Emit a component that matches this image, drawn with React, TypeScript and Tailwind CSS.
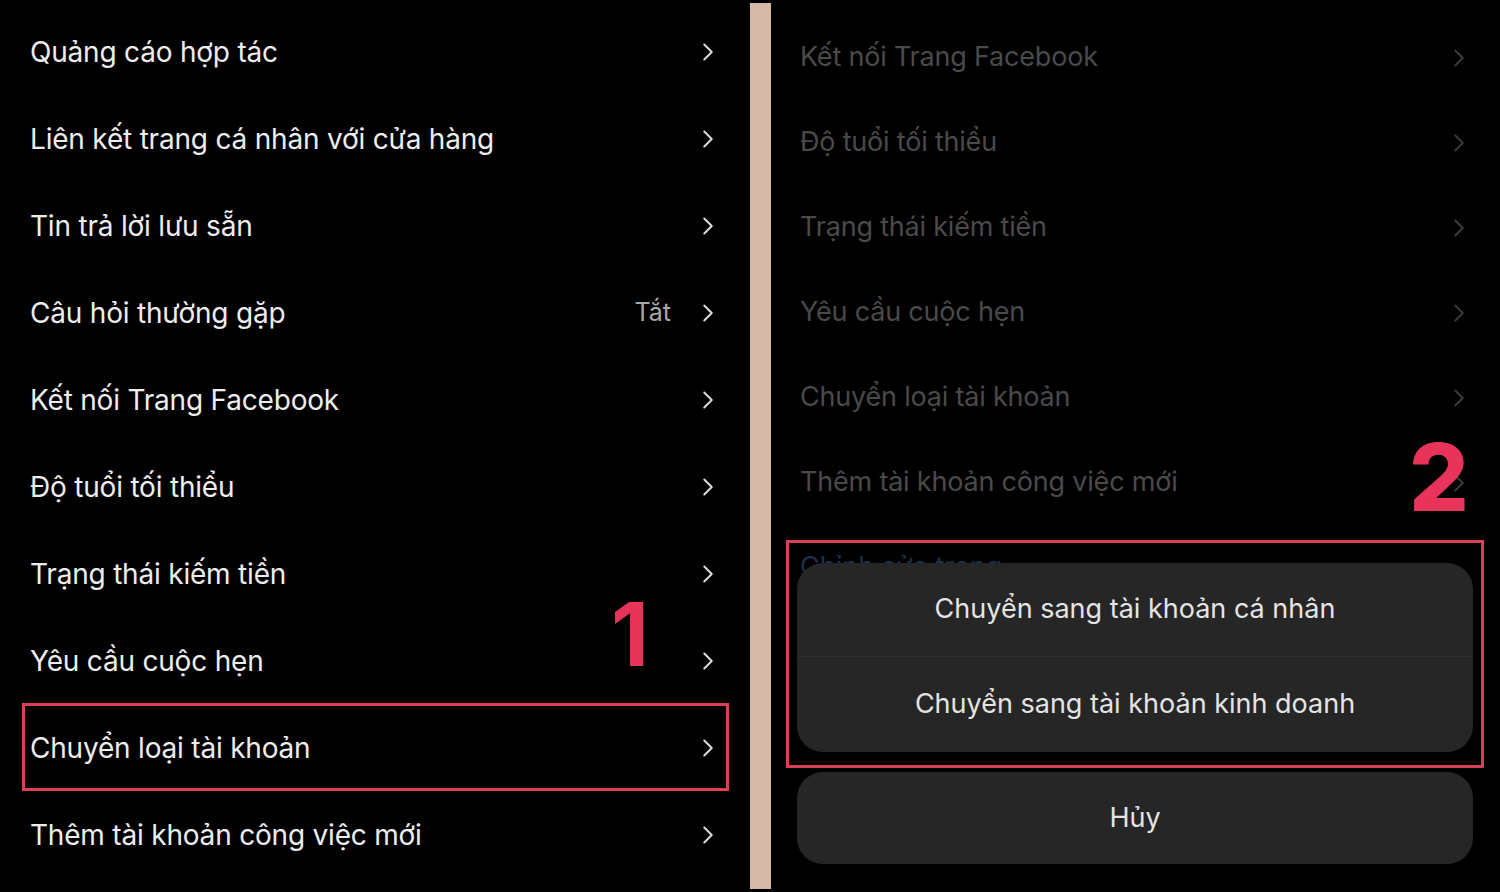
import {ChevronRight} from 'lucide-react';

const leftItems = [
	{label: 'Quảng cáo hợp tác'},
	{label: 'Liên kết trang cá nhân với cửa hàng'},
	{label: 'Tin trả lời lưu sẵn'},
	{label: 'Câu hỏi thường gặp', value: 'Tắt'},
	{label: 'Kết nối Trang Facebook'},
	{label: 'Độ tuổi tối thiểu'},
	{label: 'Trạng thái kiếm tiền'},
	{label: 'Yêu cầu cuộc hẹn'},
	{label: 'Chuyển loại tài khoản', marked: true},
	{label: 'Thêm tài khoản công việc mới'},
];

const rightItems = [
	'Kết nối Trang Facebook',
	'Độ tuổi tối thiểu',
	'Trạng thái kiếm tiền',
	'Yêu cầu cuộc hẹn',
	'Chuyển loại tài khoản',
	'Thêm tài khoản công việc mới',
];

const font = {fontFamily: 'Inter, "Noto Sans", sans-serif'};

const App = () => {
	return (
		<div className="flex w-[1500px] h-[892px] bg-black overflow-hidden" style={font}>
			{/* left screenshot */}
			<div className="relative w-[750px] pt-[8px]">
				{leftItems.map((item) => (
					<div key={item.label} className="relative flex items-center h-[87px] pl-[30px] pr-[27px]">
						<span className="flex-1 text-[28px] text-[#ededed] tracking-[-0.2px]">{item.label}</span>
						{item.value && <span className="text-[25px] text-[#a9a9a9] mr-[22px]">{item.value}</span>}
						<ChevronRight className="w-[30px] h-[30px] text-[#dcdcdc]" strokeWidth={1.6} />
						{item.marked && (
							<div className="absolute left-[22px] right-[21px] top-[-1px] bottom-0 border-[3px] border-[#dc4058]" />
						)}
					</div>
				))}
				<span className="absolute left-[611px] top-[590px] text-[88px] leading-[88px] font-bold text-[#e8345a]">1</span>
			</div>

			<div className="w-[21px] my-[3px] bg-[#d3b9a6]" />

			{/* right screenshot */}
			<div className="relative flex-1 pt-[15px]">
				{rightItems.map((label) => (
					<div key={label} className="flex items-center h-[85px] pl-[29px] pr-[26px]">
						<span className="flex-1 text-[27px] text-[#4a4a4a] tracking-[-0.2px]">{label}</span>
						<ChevronRight className="w-[30px] h-[30px] text-[#3a3a3a]" strokeWidth={1.6} />
					</div>
				))}
				<div className="flex items-center h-[85px] pl-[29px]">
					<span className="text-[27px] text-[#1c2f4d]">Chỉnh sửa trang</span>
				</div>

				<span className="absolute left-[638px] top-[430px] text-[94px] leading-[94px] font-extrabold text-[#e8345a]">2</span>

				{/* action sheet */}
				<div className="absolute left-[26px] right-[27px] bottom-[28px] flex flex-col gap-[20px]">
					<div className="flex flex-col rounded-[26px] bg-[#262626]">
						<div className="flex items-center justify-center h-[94px] border-b border-[#303030] text-[27px] text-[#e4e4e4]">
							Chuyển sang tài khoản cá nhân
						</div>
						<div className="flex items-center justify-center h-[95px] text-[27px] text-[#e4e4e4]">
							Chuyển sang tài khoản kinh doanh
						</div>
					</div>
					<div className="flex items-center justify-center h-[92px] rounded-[26px] bg-[#262626] text-[27px] text-[#e4e4e4]">
						Hủy
					</div>
				</div>
				<div className="absolute left-[15px] right-[16px] top-[540px] h-[228px] border-[3px] border-[#dc4058]" />
			</div>
		</div>
	);
};

export default App;
